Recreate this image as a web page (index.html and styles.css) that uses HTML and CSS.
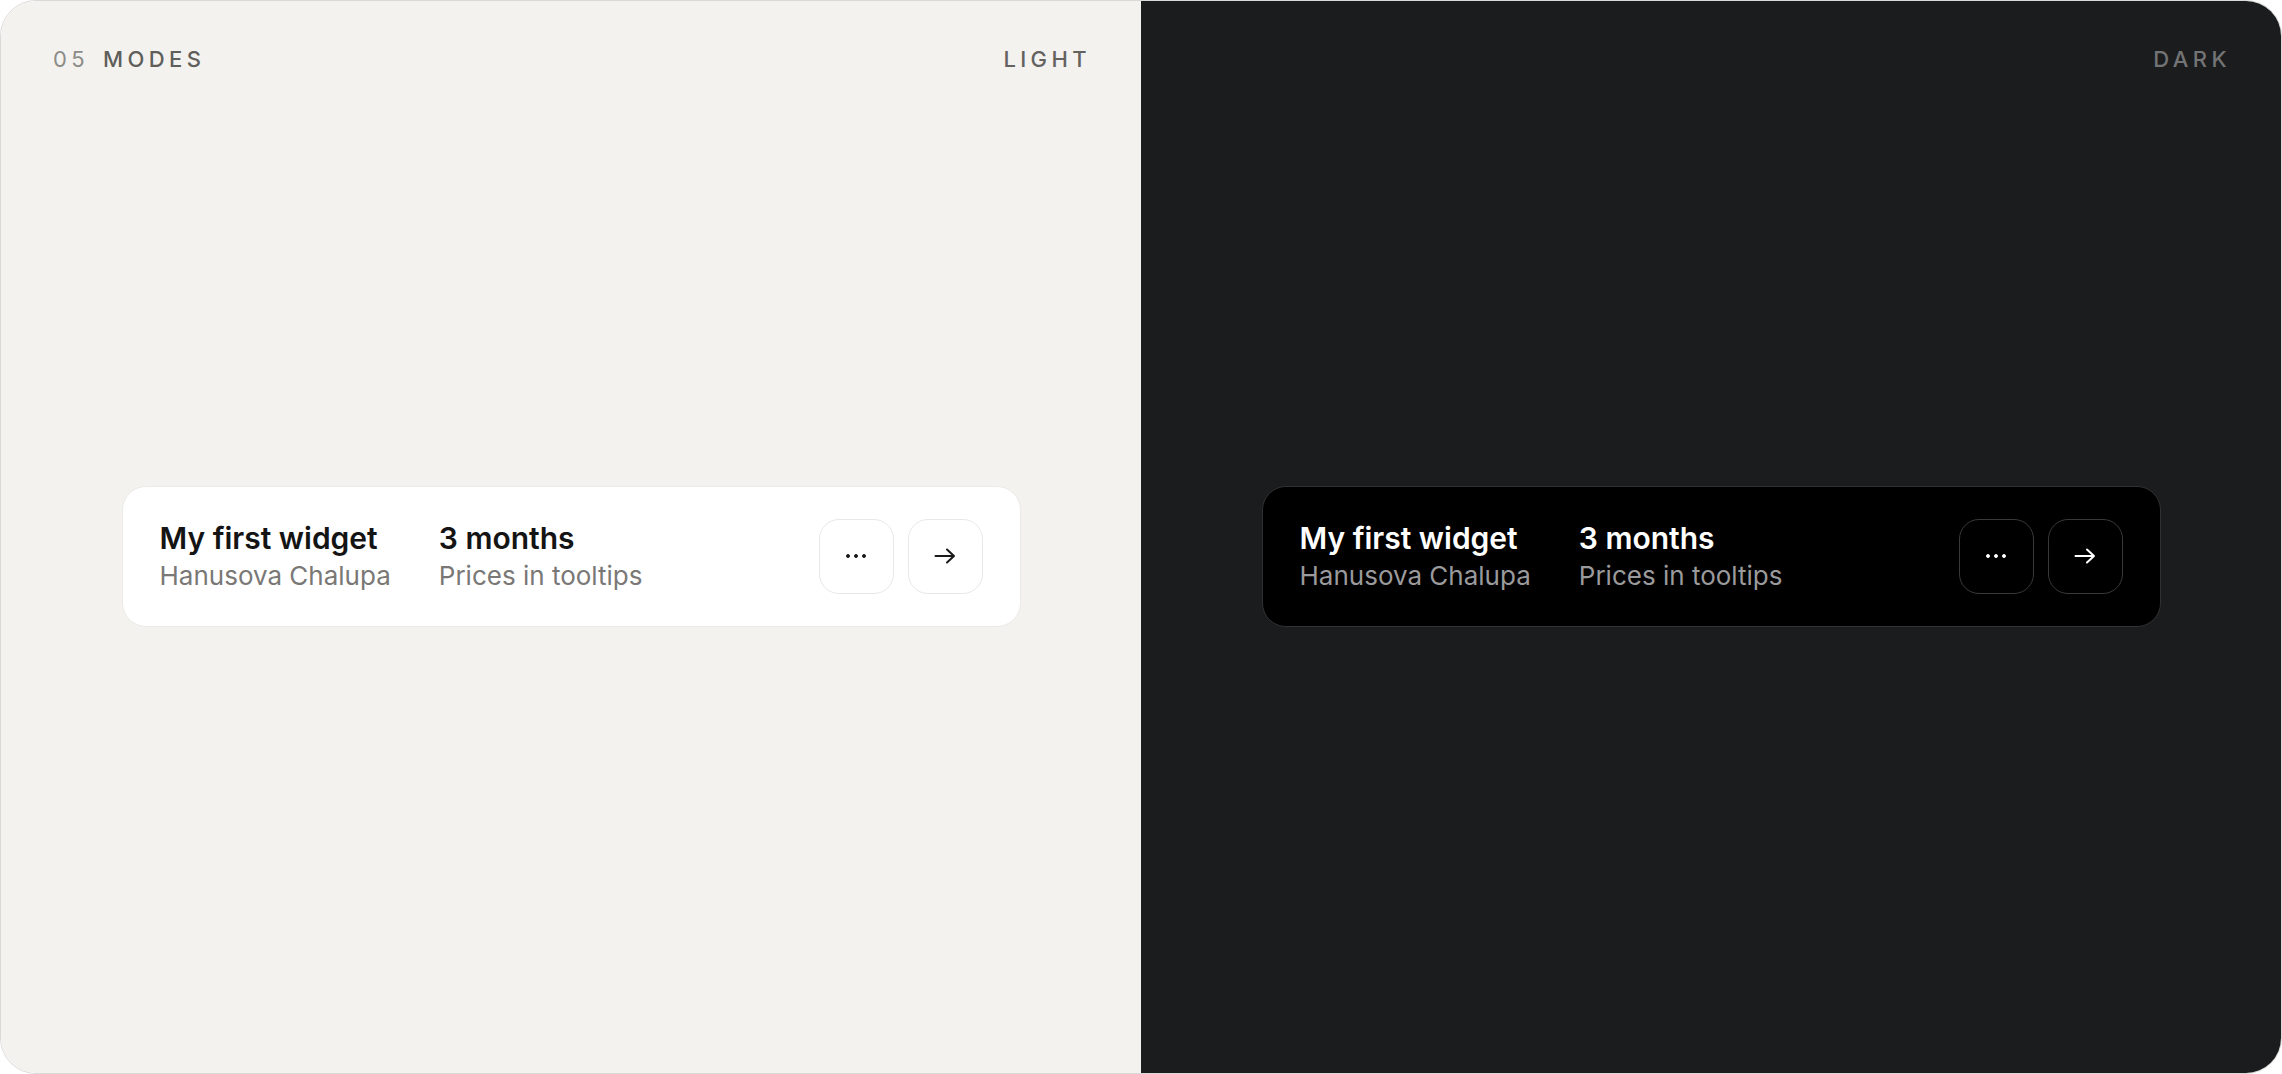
FILE: index.html
```html
<!DOCTYPE html>
<html lang="en">
<head>
<meta charset="utf-8">
<title>Modes</title>
<link rel="stylesheet" href="styles.css">
</head>
<body>
<div class="frame">
  <section class="panel panel-light">
    <header class="panel-head">
      <div class="label"><span class="num">05</span><span class="name">MODES</span></div>
      <div class="mode">LIGHT</div>
    </header>
    <div class="panel-body">
      <div class="card">
        <div class="col col-1">
          <div class="title">My first widget</div>
          <div class="sub">Hanusova Chalupa</div>
        </div>
        <div class="col">
          <div class="title">3 months</div>
          <div class="sub">Prices in tooltips</div>
        </div>
        <div class="actions">
          <button class="btn" aria-label="More">
            <svg width="22" height="6" viewBox="0 0 22 6"><circle cx="3" cy="3" r="1.5"/><circle cx="11" cy="3" r="1.5"/><circle cx="19" cy="3" r="1.5"/></svg>
          </button>
          <button class="btn" aria-label="Open">
            <svg width="22" height="16" viewBox="0 0 22 16" fill="none"><path d="M1.5 8H20M13 1.5L20 8L13 14.5" stroke-width="2" stroke-linecap="round" stroke-linejoin="round"/></svg>
          </button>
        </div>
      </div>
    </div>
  </section>
  <section class="panel panel-dark">
    <header class="panel-head">
      <div class="label"></div>
      <div class="mode">DARK</div>
    </header>
    <div class="panel-body">
      <div class="card">
        <div class="col col-1">
          <div class="title">My first widget</div>
          <div class="sub">Hanusova Chalupa</div>
        </div>
        <div class="col">
          <div class="title">3 months</div>
          <div class="sub">Prices in tooltips</div>
        </div>
        <div class="actions">
          <button class="btn" aria-label="More">
            <svg width="22" height="6" viewBox="0 0 22 6"><circle cx="3" cy="3" r="1.5"/><circle cx="11" cy="3" r="1.5"/><circle cx="19" cy="3" r="1.5"/></svg>
          </button>
          <button class="btn" aria-label="Open">
            <svg width="22" height="16" viewBox="0 0 22 16" fill="none"><path d="M1.5 8H20M13 1.5L20 8L13 14.5" stroke-width="2" stroke-linecap="round" stroke-linejoin="round"/></svg>
          </button>
        </div>
      </div>
    </div>
  </section>
</div>
</body>
</html>
```
FILE: styles.css
```css
* { box-sizing: border-box; }
html, body {
  margin: 0;
  padding: 0;
  background: #ffffff;
}
body {
  width: 2282px;
  height: 1074px;
  font-family: Inter, "Noto Sans", sans-serif;
}
.frame {
  width: 2282px;
  height: 1074px;
  display: grid;
  grid-template-columns: 1fr 1fr;
  border-radius: 36px;
  overflow: hidden;
  border: 1px solid #d9d9d7;
}
.panel {
  display: flex;
  flex-direction: column;
  padding: 45px 52px 33px 52px;
}
.panel-light { background: #f3f2ef; }
.panel-dark { background: #1b1c1e; }
.panel-head {
  display: flex;
  justify-content: space-between;
  align-items: center;
  font-size: 22px;
  line-height: 26px;
  letter-spacing: 0.2em;
  font-weight: 500;
}
.label { display: flex; gap: 14px; }
.num { color: #8c8b88; font-weight: 400; }
.name { color: #5f5e5b; }
.mode { margin-right: -2px; }
.panel-light .mode { color: #63625f; }
.panel-dark .mode { color: #737476; }
.panel-body {
  flex: 1;
  display: flex;
  align-items: center;
  justify-content: center;
}
.card {
  width: 899px;
  height: 141px;
  border-radius: 24px;
  display: flex;
  align-items: center;
  padding: 2px 37px 0 37px;
}
.panel-light .card {
  background: #ffffff;
  border: 1px solid #ebeae7;
}
.panel-dark .card {
  background: #000000;
  border: 1px solid #303133;
}
.col { display: flex; flex-direction: column; }
.col-1 { margin-right: 48px; }
.title {
  font-size: 30px;
  line-height: 37px;
  font-weight: 600;
}
.sub {
  font-size: 26px;
  line-height: 37px;
  font-weight: 400;
}
.panel-light .title { color: #141414; }
.panel-light .sub { color: #797876; }
.panel-dark .title { color: #ffffff; }
.panel-dark .sub { color: #9a9a9c; }
.actions {
  margin-left: auto;
  display: flex;
  gap: 14px;
  margin-top: -2px;
}
.btn {
  width: 75px;
  height: 75px;
  border-radius: 20px;
  display: flex;
  align-items: center;
  justify-content: center;
  padding: 0;
  cursor: pointer;
}
.panel-light .btn {
  background: #ffffff;
  border: 1.5px solid #e9e8e6;
}
.panel-dark .btn {
  background: #000000;
  border: 1.5px solid #38393b;
}
.panel-light .btn svg { fill: #1a1a1a; stroke: #1a1a1a; }
.panel-dark .btn svg { fill: #ffffff; stroke: #ffffff; }
.btn svg path { fill: none; }
```
